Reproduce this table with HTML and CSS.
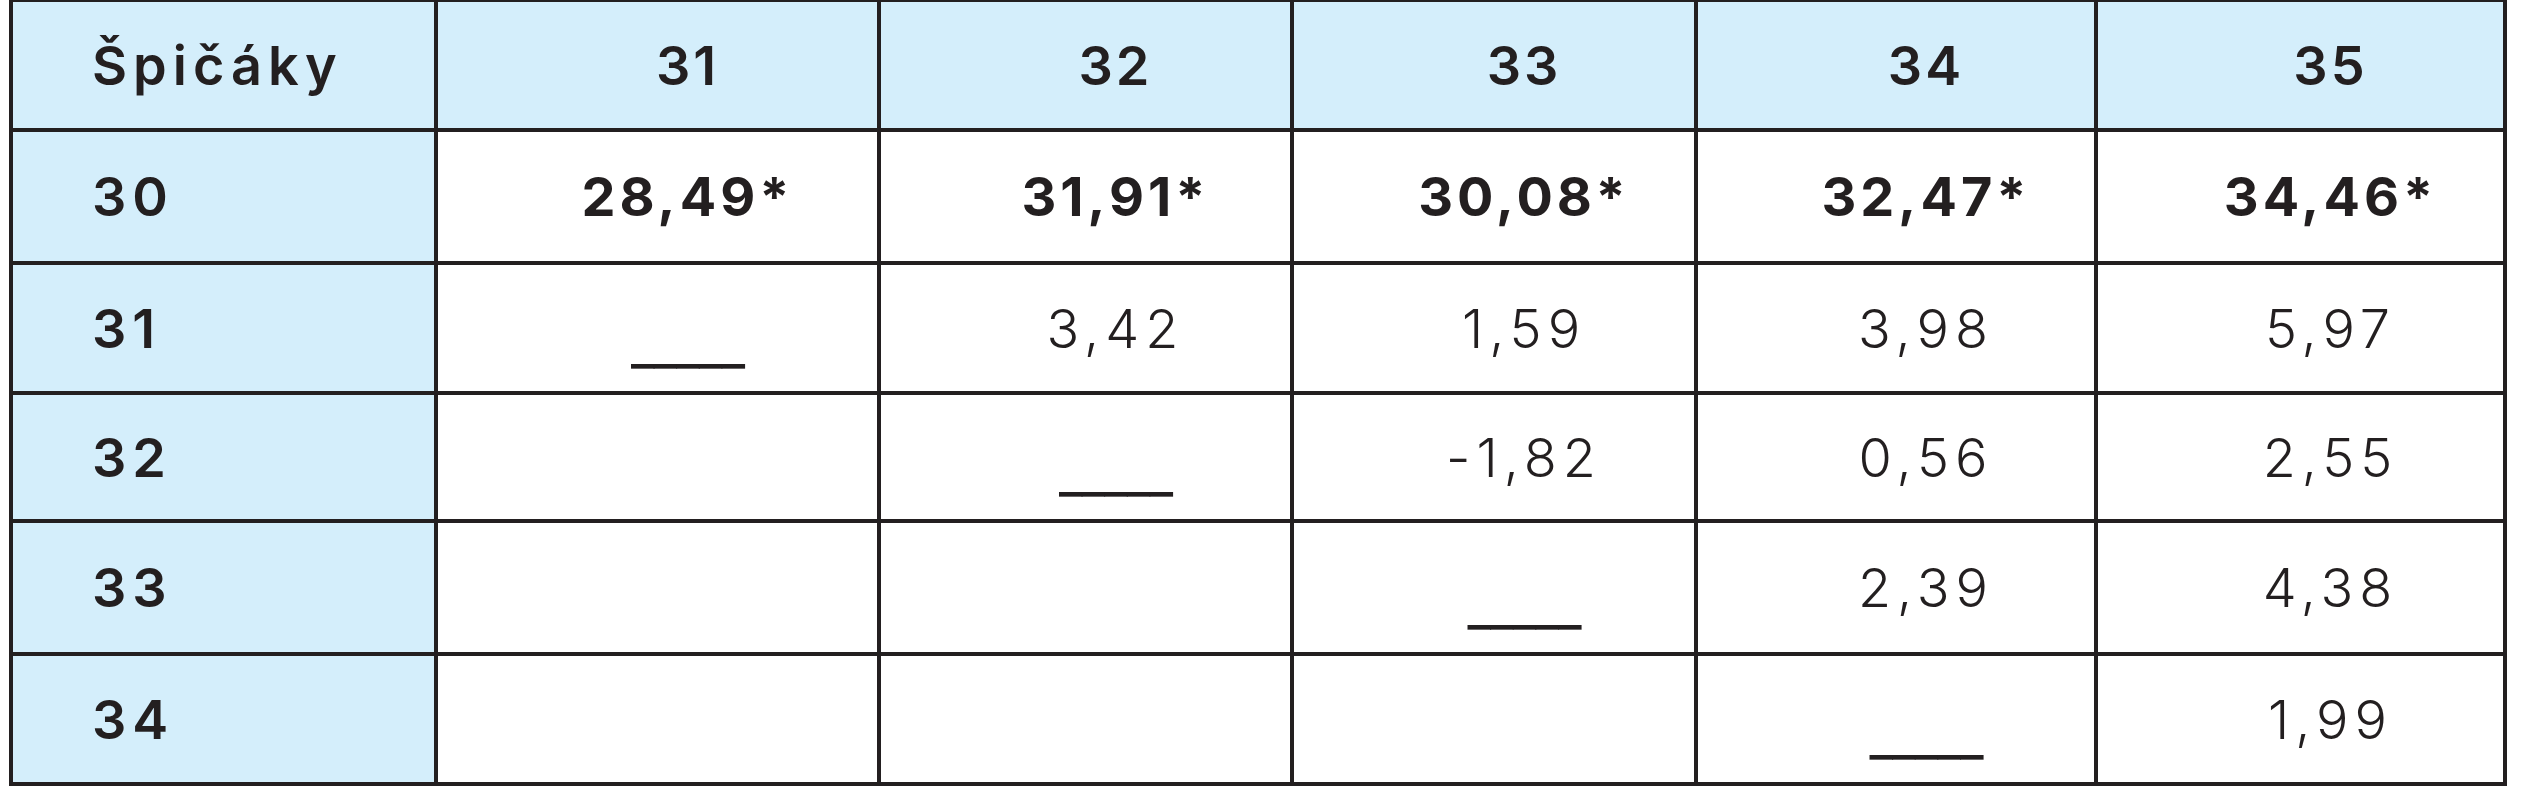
FILE: index.html
```
<!DOCTYPE html>
<html lang="cs">
<head>
<meta charset="utf-8">
<title>Špičáky</title>
<link rel="stylesheet" href="styles.css">
</head>
<body>
<div class="grid">
  <div class="cell head label">Špičáky</div>
  <div class="cell head">31</div>
  <div class="cell head">32</div>
  <div class="cell head">33</div>
  <div class="cell head">34</div>
  <div class="cell head">35</div>

  <div class="cell side label">30</div>
  <div class="cell strong">28,49*</div>
  <div class="cell strong">31,91*</div>
  <div class="cell strong">30,08*</div>
  <div class="cell strong">32,47*</div>
  <div class="cell strong">34,46*</div>

  <div class="cell side label">31</div>
  <div class="cell dash">_____</div>
  <div class="cell">3,42</div>
  <div class="cell">1,59</div>
  <div class="cell">3,98</div>
  <div class="cell">5,97</div>

  <div class="cell side label">32</div>
  <div class="cell"></div>
  <div class="cell dash">_____</div>
  <div class="cell">-1,82</div>
  <div class="cell">0,56</div>
  <div class="cell">2,55</div>

  <div class="cell side label">33</div>
  <div class="cell"></div>
  <div class="cell"></div>
  <div class="cell dash">_____</div>
  <div class="cell">2,39</div>
  <div class="cell">4,38</div>

  <div class="cell side label">34</div>
  <div class="cell"></div>
  <div class="cell"></div>
  <div class="cell"></div>
  <div class="cell dash">_____</div>
  <div class="cell">1,99</div>
</div>
</body>
</html>
```

FILE: styles.css
```
html, body {
  margin: 0;
  padding: 0;
  background: #ffffff;
}

body {
  font-family: "Inter", "Lato", "Liberation Sans", sans-serif;
  color: #231f20;
}

.grid {
  display: grid;
  grid-template-columns: 421px 439px 409px 400px 396px 405px;
  grid-template-rows: 126px 129px 126px 124px 129px 126px;
  gap: 4px;
  padding: 4px;
  margin: -2px 0 0 9px;
  width: max-content;
  background: #231f20;
}

.cell {
  background: #ffffff;
  display: flex;
  align-items: center;
  justify-content: center;
  padding-left: 60px;
  font-size: 54px;
  font-weight: 300;
  letter-spacing: 6px;
  white-space: nowrap;
}

.head,
.side {
  background: #d4eefb;
}

.head {
  font-weight: 600;
  letter-spacing: 3px;
}

.label {
  justify-content: flex-start;
  padding-left: 79px;
  font-weight: 600;
  letter-spacing: 6px;
}

.strong {
  font-weight: 700;
  letter-spacing: 4px;
}

.dash {
  align-items: flex-end;
  padding-bottom: 20px;
  letter-spacing: -1px;
  font-weight: 500;
  font-size: 51px;
  line-height: 1;
}
```
